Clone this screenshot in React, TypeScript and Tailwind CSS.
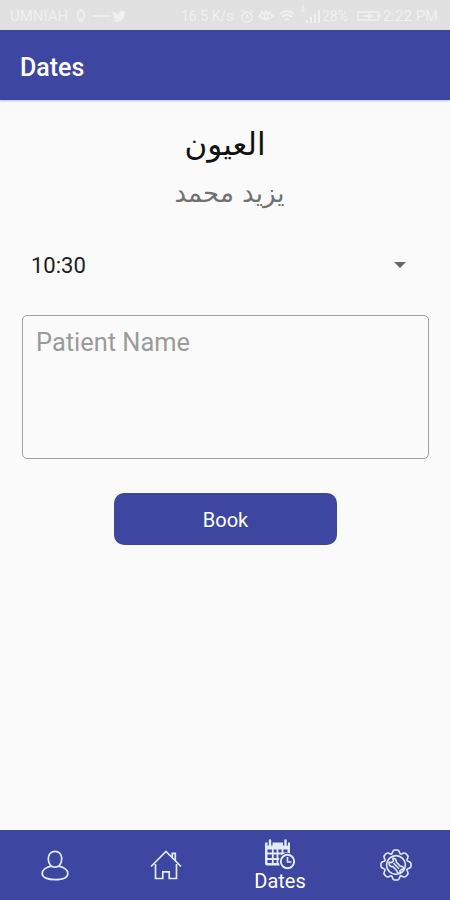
import { ReactNode, useState } from 'react';

interface TabProps {
  children: ReactNode;
  label?: string;
}

function StatusBar(): JSX.Element {
  return (
    <div className="flex h-[30px] shrink-0 items-center bg-[#e1e1e1] pt-[2px] pr-[12px] pl-[10px] text-[14px] text-[#f0f0f0]">
      <span className="w-[60px] text-[15px] whitespace-nowrap">UMNIAH</span>
      <svg className="ml-[6px] h-[14px] w-[10px]" viewBox="0 0 10 14" fill="none" stroke="currentColor" strokeWidth="1.5">
        <path d="M2 5a3 3 0 0 1 6 0v5H2zM4 2V0M6 2V0M1 7H0M9 7h1M4 10v3M6 10v3" />
      </svg>
      <svg className="ml-[7px] h-[14px] w-[19px]" viewBox="0 0 19 14" stroke="currentColor" strokeWidth="1.5">
        <path d="M0 7h18" />
      </svg>
      <svg className="h-[13px] w-[14px]" viewBox="0 0 24 20" fill="currentColor">
        <path d="M24 2.4a10 10 0 0 1-2.8.8A5 5 0 0 0 23.300.4a10 10 0 0 1-3.100 1.200A4.900 4.900 0 0 0 11.800 6 14 14 0 0 1 1.700 1 4.900 4.900 0 0 0 3.200 7.500 5 5 0 0 1 1 6.900a4.900 4.900 0 0 0 4 4.900 5 5 0 0 1-2.300.1 4.900 4.900 0 0 0 4.600 3.400A10 10 0 0 1 0 17.400 14 14 0 0 0 21.500 4.900 10 10 0 0 0 24 2.400z" />
      </svg>
      <span className="ml-auto w-[56px] whitespace-nowrap">16.5 K/s</span>
      <svg className="ml-[3px] h-[14px] w-[14px]" viewBox="0 0 14 14" fill="none" stroke="currentColor" strokeWidth="1.5">
        <circle cx="7" cy="8" r="5" />
        <path d="M7 5v3l2 1M1 3l3-2M13 3l-3-2" />
      </svg>
      <svg className="ml-[4px] h-[14px] w-[16px]" viewBox="0 0 16 14" fill="none" stroke="currentColor" strokeWidth="1.5">
        <path d="M1 7q7-7 14 0q-7 7-14 0zM3 2l2 2M8 1v2M13 2l-2 2" />
        <circle cx="8" cy="7" r="2" />
      </svg>
      <svg className="ml-[5px] h-[14px] w-[16px]" viewBox="0 0 16 14" fill="none" stroke="currentColor" strokeWidth="1.8">
        <path d="M1 5q7-6 14 0M3 8q5-4 10 0M6 11q2-2 4 0" />
      </svg>
      <span className="ml-[5px] self-start pt-[1px] text-[9px]">4</span>
      <svg className="ml-[1px] h-[14px] w-[16px]" viewBox="0 0 16 14" fill="currentColor">
        <path d="M0 11h2v3H0zM4 8h2v6H4zM8 5h2v9H8zM12 1h2v13h-2z" />
      </svg>
      <span className="w-[27px] whitespace-nowrap">28%</span>
      <svg className="ml-[8px] h-[12px] w-[24px]" viewBox="0 0 24 12" fill="none" stroke="currentColor" strokeWidth="1.5">
        <path d="M1 2h20v8H1zM23 4v4M6 6h10M11 4l4 2-4 2" />
      </svg>
      <span className="ml-[2px] w-[55px] text-[15px] whitespace-nowrap">2:22 PM</span>
    </div>
  );
}

function UserIcon(): JSX.Element {
  return (
    <svg className="h-8 w-8" viewBox="0 0 32 32" fill="none" stroke="currentColor" strokeWidth="1.7">
      <path d="M12.500 17.200C10.200 15.400 9.300 12 9.300 9.300C9.300 5.200 12.200 2.300 16 2.300s6.700 2.900 6.700 7c0 2.700-.9 6.100-3.200 7.900c4.800.9 9.300 3.600 9.300 7.300 0 4.100-5.600 6.200-12.800 6.200S3.200 28.600 3.200 24.500c0-3.700 4.500-6.400 9.300-7.300q3.500 1.800 7 0" />
    </svg>
  );
}

function HomeIcon(): JSX.Element {
  return (
    <svg className="h-8 w-8" viewBox="0 0 32 32" fill="none" stroke="currentColor" strokeWidth="1.700">
      <path d="M1 17.500 16 2.500l15 15M5.500 15v14.500h7.300v-6.700h6.400v6.700h7.300V15M22.300 8.500V4.300h3v7.300" />
    </svg>
  );
}

function DatesIcon(): JSX.Element {
  return (
    <svg className="h-[31px] w-8" viewBox="0 0 32 31">
      <path
        fill="currentColor"
        fillRule="evenodd"
        d="M1 3.500h25v23H3a2 2 0 0 1-2-2zM3.500 10.500v13.500h20V10.500z"
      />
      <path stroke="#3d47a1" strokeWidth="5" d="M6 0v6.500M21.500 0v6.500" />
      <path stroke="currentColor" strokeWidth="2.400" strokeLinecap="round" d="M6 1.500v4.500M21.500 1.500v4.500" />
      <path stroke="currentColor" strokeWidth="1.800" d="M8.800 10v15M13.500 10v15M18.500 10v15M3 14.500h21M3 20h21" />
      <circle cx="23.500" cy="22.500" r="8.700" fill="#3d47a1" />
      <circle cx="23.500" cy="22.500" r="6.700" fill="#3d47a1" stroke="currentColor" strokeWidth="2" />
      <path fill="none" stroke="currentColor" strokeWidth="1.600" d="M23.500 18v5h4" />
    </svg>
  );
}

function SettingsIcon(): JSX.Element {
  return (
    <svg className="ml-[3px] h-8 w-8" viewBox="0 0 32 32" fill="none" stroke="currentColor" strokeWidth="1.600">
      {/* the outline of one tooth and the gap after it, turned around the centre */}
      {[0, 45, 90, 135, 180, 225, 270, 315].map((angle) => (
        <path
          key={angle}
          d="M12.200 4.200Q12.900 1 14.700 1h2.600Q19.100 1 19.800 4.200q.7 1.300 2 .900"
          transform={`rotate(${angle} 16 16)`}
        />
      ))}
      <circle cx="16" cy="16" r="9.400" />
      <path d="M12.900 9.300l.5 2.600-2 1.700-2.300-.5c-.6 2.600 1 4.700 3.900 4.500l3.900 4.200c.2 1.900 1.500 2.900 3.500 2.600l-.5-2.500 1.900-1.600 2 .2c0-2.300-1.600-3.500-3.700-3.400l-3.800-4.100c.1-2.100-1.100-3.700-3.400-3.700zM13.500 14l5.500 5.700" />
    </svg>
  );
}

function Tab({ children, label }: TabProps): JSX.Element {
  return (
    <button className="flex flex-col items-center justify-center">
      {children}
      {label && <span className="text-[20px] leading-[22px] text-white">{label}</span>}
    </button>
  );
}

export default function App(): JSX.Element {
  const [patient, setPatient] = useState('');

  return (
    <div className="flex h-[900px] w-[450px] flex-col bg-[#fafafa] font-['Roboto',sans-serif]">
      <StatusBar />
      <header className="flex h-[70px] shrink-0 items-center bg-[#3d47a1] pt-[5px] pl-[20px] shadow-[0_1px_2px_rgba(61,71,161,0.35)]">
        <h1 className="text-[25px] font-medium text-white">Dates</h1>
      </header>
      <main className="flex flex-1 flex-col px-[22px] pt-[22px]">
        <div className="flex flex-col items-center font-['DejaVu_Sans',sans-serif]" dir="rtl">
          <h2 className="h-[46px] text-[31px] leading-[44px] text-[#111111]">العيون</h2>
          <p className="mt-[3px] ml-[9px] h-[41px] text-[26px] leading-[44px] text-[#717171]">يزيد محمد</p>
        </div>
        <button className="mt-[29px] flex h-12 items-center justify-between pr-[22px] pl-[9px]">
          <span className="text-[22px] text-[#1c1c1c]">10:30</span>
          <svg className="h-[6px] w-[12px]" viewBox="0 0 12 6" fill="#666666">
            <path d="M0 0h12L6 6z" />
          </svg>
        </button>
        <textarea
          className="mt-[26px] h-[144px] w-[407px] resize-none rounded-[5px] border-[1.5px] border-[#a0a0a0] px-[13px] pt-[10px] text-[25.4px] leading-[32px] text-[#1c1c1c] outline-none placeholder:text-[#9b9b9b]"
          placeholder="Patient Name"
          value={patient}
          onChange={(e) => setPatient(e.target.value)}
        />
        <button className="mt-[34px] ml-[92px] h-[52px] w-[223px] rounded-[10px] bg-[#3d47a1] pt-[2px] text-[20px] text-white">
          Book
        </button>
      </main>
      <nav className="grid h-[70px] shrink-0 grid-cols-[110px_112px_116px_112px] bg-[#3d47a1] text-[#e3e9ff]">
        <Tab>
          <UserIcon />
        </Tab>
        <Tab>
          <HomeIcon />
        </Tab>
        <Tab label="Dates">
          <DatesIcon />
        </Tab>
        <Tab>
          <SettingsIcon />
        </Tab>
      </nav>
    </div>
  );
}
